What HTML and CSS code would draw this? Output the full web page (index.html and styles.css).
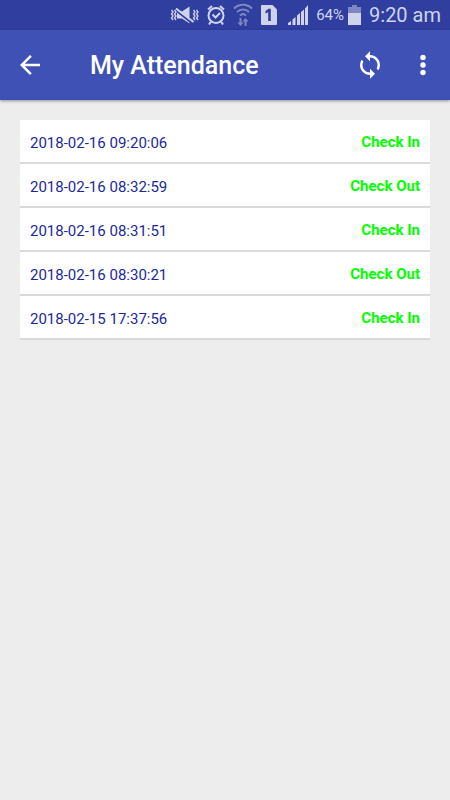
FILE: index.html
```html
<!DOCTYPE html>
<html lang="en">
<head>
  <meta charset="UTF-8" />
  <meta name="viewport" content="width=device-width, initial-scale=1.0"/>
  <title>My Attendance</title>
  <link rel="stylesheet" href="styles.css">
</head>
<body>

  <div class="status-bar">
    <!-- vibrate / muted -->
    <svg class="icon" width="29" height="20" viewBox="0 0 29 20" fill="none" stroke="currentColor">
      <path d="M7 6.500h5l7.500-5v17l-7.500-5H7z" fill="currentColor" stroke="none"/>
      <path d="M6 5.500L22.500 18.500" stroke="#303f9f" stroke-width="2"/>
      <path d="M6 3.500L23.500 17" stroke-width="2"/>
      <path d="M1.500 5l1.500 2-1.500 2 1.500 2-1.500 2 1.500 2M4.500 5l1.500 2-1.500 2 1.500 2-1.500 2 1.500 2M23.500 5l1.500 2-1.500 2 1.500 2-1.500 2 1.500 2M26.500 5l1.500 2-1.500 2 1.500 2-1.500 2 1.500 2" stroke-width="1.300"/>
    </svg>
    <!-- alarm -->
    <svg class="icon" width="18" height="20" viewBox="0 0 18 20" fill="none" stroke="currentColor" stroke-width="2">
      <circle cx="9" cy="10.500" r="7.500"/>
      <path d="M5.500 9.500l3 3 4.500-4.500"/>
      <path d="M1 4.500l4-3.500M17 4.500l-4-3.500M4 16.500l-2 3M14 16.500l2 3"/>
    </svg>
    <!-- wifi with traffic arrows -->
    <svg class="icon dim" width="20" height="24" viewBox="0 0 20 24" fill="none" stroke="currentColor" stroke-width="2">
      <path d="M1 5.500a12.500 12.500 0 0 1 18 0M4 9a8.500 8.500 0 0 1 12 0M7 12.500a4.500 4.500 0 0 1 6 0"/>
      <path d="M7.500 15v6M12.500 23v-6"/>
      <path d="M4.500 19.500h6l-3 3.500zM9.500 18.500h6l-3-3.500z" fill="currentColor" stroke="none"/>
    </svg>
    <!-- sim 1 -->
    <svg class="icon" width="16" height="20" viewBox="0 0 16 20">
      <path d="M1 0h10.500L16 4.500V19a1 1 0 0 1-1 1H1a1 1 0 0 1-1-1V1a1 1 0 0 1 1-1z" fill="currentColor"/>
      <path d="M4.500 6l3-2.200h2.300V16H7.200V7.200L4.500 8.500z" fill="#303f9f"/>
    </svg>
    <!-- signal -->
    <svg class="icon signal" width="20" height="20" viewBox="0 0 20 20" fill="currentColor">
      <path d="M0 20v-2l3-2V20zM4.500 20v-5.500l3-2.500V20zM9 20v-9.500l3-2.500v12zM13 20V7l3-2.500V20zM17 20V3.500L20 0v20z"/>
    </svg>
    <span class="percent">64%</span>
    <!-- battery -->
    <svg class="icon battery" width="13" height="20" viewBox="0 0 13 20">
      <path d="M4 0h5v2h4v6H0V2h4z" fill="#7d87c4"/>
      <path d="M0 8h13v12H0z" fill="currentColor"/>
    </svg>
    <span class="clock">9:20 am</span>
  </div>

  <header class="app-bar">
    <button class="icon-button back" aria-label="Back">
      <svg width="20" height="20" viewBox="4 4 16 16" fill="currentColor">
        <path d="M20 11H7.830l5.590-5.590L12 4l-8 8 8 8 1.410-1.410L7.830 13H20v-2z"/>
      </svg>
    </button>
    <h1>My Attendance</h1>
    <button class="icon-button" aria-label="Refresh">
      <svg width="30" height="30" viewBox="0 0 24 24" fill="currentColor">
        <path d="M12 4V1L8 5l4 4V6c3.310 0 6 2.690 6 6 0 1.010-.25 1.970-.7 2.800l1.460 1.460A7.930 7.930 0 0 0 20 12c0-4.420-3.580-8-8-8zm0 14c-3.310 0-6-2.690-6-6 0-1.010.25-1.970.7-2.800L5.240 7.740A7.930 7.930 0 0 0 4 12c0 4.420 3.580 8 8 8v3l4-4-4-4v3z"/>
      </svg>
    </button>
    <button class="icon-button more" aria-label="More options">
      <svg width="6" height="22" viewBox="0 0 6 22" fill="currentColor">
        <circle cx="3" cy="3.500" r="2.700"/>
        <circle cx="3" cy="11" r="2.700"/>
        <circle cx="3" cy="18.500" r="2.700"/>
      </svg>
    </button>
  </header>

  <main>
    <ul class="attendance">
      <li><time>2018-02-16 09:20:06</time><span class="type">Check In</span></li>
      <li><time>2018-02-16 08:32:59</time><span class="type">Check Out</span></li>
      <li><time>2018-02-16 08:31:51</time><span class="type">Check In</span></li>
      <li><time>2018-02-16 08:30:21</time><span class="type">Check Out</span></li>
      <li><time>2018-02-15 17:37:56</time><span class="type">Check In</span></li>
    </ul>
  </main>

</body>
</html>
```
FILE: styles.css
```css
body {
  margin: 0;
  font-family: Roboto, sans-serif;
  background-color: #ededed;
}
.status-bar {
  display: flex;
  align-items: center;
  justify-content: flex-end;
  gap: 8px;
  height: 30px;
  padding: 0 9px;
  background-color: #303f9f;
  color: #cfd3ec;
}
.icon {
  flex: none;
}
.dim {
  color: #7d87c4;
}
.signal {
  margin-left: 3px;
}
.percent {
  font-size: 15px;
}
.battery {
  margin-left: -4px;
}
.clock {
  font-size: 20px;
}
.app-bar {
  display: flex;
  align-items: center;
  height: 70px;
  padding: 0 10px;
  background-color: #3f51b5;
  box-shadow: 0 1px 3px rgba(0, 0, 0, 0.4);
  color: #fff;
}
.app-bar h1 {
  flex: 1;
  margin: 0 0 0 40px;
  font-size: 25px;
  font-weight: 500;
}
.icon-button {
  display: flex;
  align-items: center;
  justify-content: center;
  width: 40px;
  height: 40px;
  padding: 0;
  border: none;
  background: none;
  color: inherit;
  cursor: pointer;
}
.more {
  width: 35px;
  margin-left: 15px;
}
main {
  padding: 20px;
}
.attendance {
  margin: 0;
  padding: 0;
  list-style: none;
}
.attendance li {
  display: flex;
  justify-content: space-between;
  padding: 12px 10px 9px;
  border-bottom: 2px solid #dadada;
  background-color: #fff;
  font-size: 15px;
  line-height: 20px;
}
.attendance time {
  padding-top: 1px;
  color: #1a2a9c;
}
.type {
  color: #0f0;
  font-weight: bold;
}
```
